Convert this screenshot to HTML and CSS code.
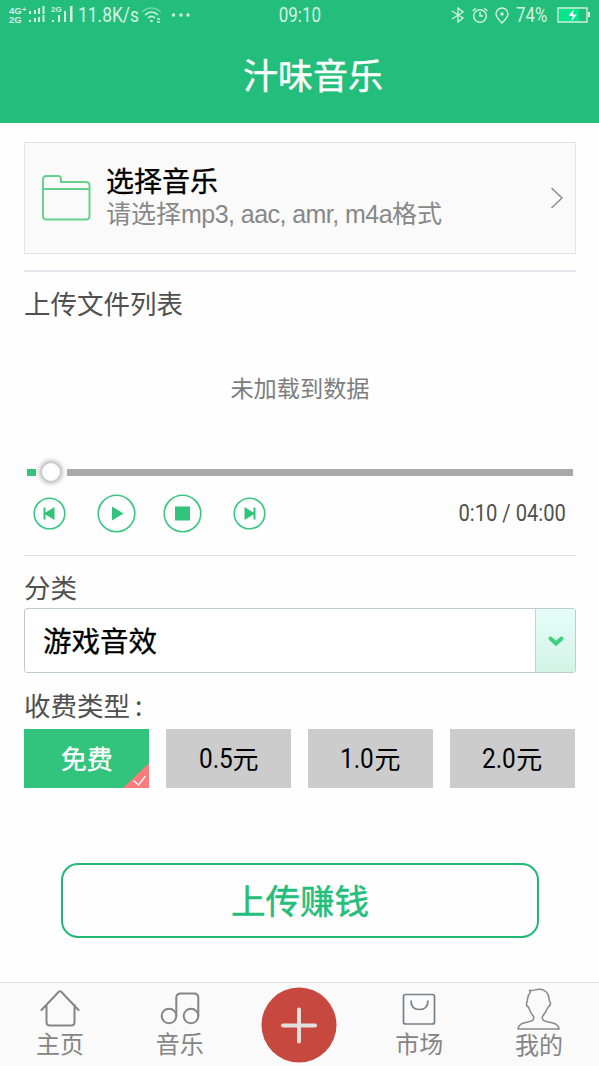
FILE: index.html
```html
<!DOCTYPE html>
<html lang="zh-CN">
<head>
<meta charset="utf-8">
<title>汁味音乐</title>
<link rel="stylesheet" href="styles.css">
</head>
<body>
<div class="app">
  <header class="header">
    <div class="status">
      <div class="status-left">
        <div class="net-types"><span>4G<sup>+</sup></span><span>2G</span></div>
        <svg class="signal-dual" width="16" height="18" viewBox="0 0 16 18" fill="#d3f2e3"><path d="M0 5h2v3H0zM5 4h2v4H5zM9 2h2v6H9zM13.500 0h2v8h-2zM0 14h2v2H0zM5 12h2v4H5zM9 11h2v5H9zM13.500 9h2v7h-2z"/></svg>
        <div class="sim2">
          <span>2G</span>
          <svg width="22" height="17" viewBox="0 0 22 17" fill="#d3f2e3"><path d="M1 14h2v2H1zM7 9h2v7H7zM13 5h2v11h-2zM19 0h2.500v16H19z"/></svg>
        </div>
        <span class="speed">11.8K/s</span>
        <svg class="wifi" width="22" height="18" viewBox="0 0 22 18" fill="none" stroke="#d3f2e3" stroke-width="1.500"><path d="M1 6q9-8 19 0" opacity=".45"/><path d="M4 9q6.500-6 13 0M7 12q3.500-3.500 7 0"/><circle cx="10.500" cy="15" r="1.300" fill="#d3f2e3" stroke="none"/><path d="M16 13h3M16 16h3"/></svg>
        <svg class="more" width="20" height="6" viewBox="0 0 20 6" fill="#d3f2e3"><circle cx="2.500" cy="3" r="1.700"/><circle cx="10" cy="3" r="1.700"/><circle cx="17" cy="3" r="1.700"/></svg>
      </div>
      <span class="clock">09:10</span>
      <div class="status-right">
        <svg width="14" height="16" viewBox="0 0 14 16" fill="none" stroke="#d3f2e3" stroke-width="1.300"><path d="M1 4l11 7-5 4V1l5 4L1 12"/></svg>
        <svg width="16" height="17" viewBox="0 0 16 17" fill="none" stroke="#d3f2e3" stroke-width="1.400"><circle cx="8" cy="9" r="6.300"/><path d="M8 5v4h3M.700 4l3-2.700M15.300 4l-3-2.700"/></svg>
        <svg width="14" height="17" viewBox="0 0 14 17" fill="none" stroke="#d3f2e3" stroke-width="1.400"><path d="M7 16C3 12 1 9.500 1 7a6 6 0 0 1 12 0c0 2.500-2 5-6 9z"/><circle cx="7" cy="7" r="1.700" fill="#d3f2e3" stroke="none"/></svg>
        <span class="percent">74%</span>
        <svg width="34" height="16" viewBox="0 0 34 16"><path d="M2 2h20v12H2z" fill="#00e68c"/><path d="M1 1h29v14H1z" fill="none" stroke="#d3f2e3" stroke-width="1.300"/><path d="M31 5h2v5h-2z" fill="#d3f2e3"/><path d="M16.500 2.500l-5 6.500h4l-1 5 5.500-6.500h-4z" fill="#fff"/></svg>
      </div>
    </div>
    <h1 class="title">汁味音乐</h1>
  </header>

  <main class="content">
    <section class="picker">
      <svg class="folder" width="50" height="48" viewBox="0 0 50 48" fill="none" stroke="#65d38b" stroke-width="2"><path d="M2 14V5.500Q2 2 5.500 2H17q3 0 3 3v3h25q3.500 0 3.500 3.500V42q0 3.500-3.500 3.500H5.500Q2 45.500 2 42zM2 15h46.500"/></svg>
      <div class="picker-text">
        <div class="picker-title">选择音乐</div>
        <div class="picker-hint">请选择<span>mp3, aac, amr, m4a</span>格式</div>
      </div>
      <svg width="14" height="22" viewBox="0 0 14 22" fill="none" stroke="#8d8d8d" stroke-width="1.500"><path d="M1.500 1l10.500 10L1.500 21"/></svg>
    </section>

    <section class="files">
      <h2 class="label">上传文件列表</h2>
      <p class="empty">未加载到数据</p>
      <div class="slider"><span class="played"></span><span class="knob"></span><span class="track"></span></div>
      <div class="player">
        <svg width="33" height="33" viewBox="0 0 33 33"><circle cx="16.500" cy="16.500" r="15.300" class="ring"/><path d="M10.500 10.500h2v5l9-5.500v13l-9-5.500v5h-2z" class="glyph"/></svg>
        <svg width="39" height="39" viewBox="0 0 39 39"><circle cx="19.500" cy="19.500" r="18.300" class="ring"/><path d="M15 12.500l11.500 7L15 26.500z" class="glyph"/></svg>
        <svg width="39" height="39" viewBox="0 0 39 39"><circle cx="19.500" cy="19.500" r="18.300" class="ring"/><path d="M12 12.500h15v14H12z" class="glyph"/></svg>
        <svg width="33" height="33" viewBox="0 0 33 33"><circle cx="16.500" cy="16.500" r="15.300" class="ring"/><path d="M22.500 10.500h-2v5L11.500 10v13l9-5.500v5h2z" class="glyph"/></svg>
        <span class="time">0:10 / 04:00</span>
      </div>
    </section>

    <h2 class="label category">分类</h2>
    <div class="select">
      <span class="select-value">游戏音效</span>
      <span class="select-arrow"><svg width="18" height="12" viewBox="0 0 18 12" fill="none" stroke="#3fd17d" stroke-width="4" stroke-linecap="round"><path d="M3.500 3.500L9 8.500l5.500-5"/></svg></span>
    </div>

    <h2 class="label fee">收费类型<span class="colon">:</span></h2>
    <div class="prices">
      <div class="price selected">免费
        <svg class="corner" width="26" height="25" viewBox="0 0 26 25"><path d="M26 0v25H0z" fill="#ff7a7a"/><path d="M10.500 17.500l5 4.500 7-9" fill="none" stroke="#fff" stroke-width="1.300"/></svg>
      </div>
      <div class="price"><span class="num">0.5</span>元</div>
      <div class="price"><span class="num">1.0</span>元</div>
      <div class="price"><span class="num">2.0</span>元</div>
    </div>

    <div class="upload">上传赚钱</div>
  </main>

  <nav class="tabs">
    <div class="tab">
      <svg width="42" height="42" viewBox="0 0 42 42" fill="none" stroke="#858585" stroke-width="2" stroke-linecap="round" stroke-linejoin="round"><path d="M2.500 23L19.500 5q1.500-1.500 3 0L39.500 23M7.500 18v17q0 3.500 3.500 3.500h21q3.500 0 3.500-3.500V18"/></svg>
      <span>主页</span>
    </div>
    <div class="tab">
      <svg width="42" height="42" viewBox="0 0 42 42" fill="none" stroke="#858585" stroke-width="2"><circle cx="10" cy="29" r="7.300"/><circle cx="32" cy="29" r="7.300"/><path d="M17.300 29V11q0-4.500 4.500-4.500H35q4.300 0 4.300 4.500v18"/></svg>
      <span>音乐</span>
    </div>
    <div class="tab add">
      <svg width="76" height="76" viewBox="0 0 76 76"><circle cx="38" cy="38" r="37.500" fill="#c7483f"/><path d="M38 22.500v32M22 38.500h32" stroke="#e3dfdf" stroke-width="4" stroke-linecap="round"/></svg>
    </div>
    <div class="tab">
      <svg width="42" height="42" viewBox="0 0 42 42" fill="none" stroke="#74808a" stroke-width="1.700"><rect x="5.500" y="7.500" width="31" height="29.500" rx="2"/><path d="M13 13.500q0 9 8.500 9T30 13.500"/></svg>
      <span>市场</span>
    </div>
    <div class="tab me">
      <svg width="44" height="44" viewBox="0 0 46 46" fill="none" stroke="#8a8a8a" stroke-width="1.600" stroke-linejoin="round"><path d="M14 5.500l-1-2q3 .5 6-.5c7-2 14 1 14.500 9.500 0 2 .5 3 1.500 4 0 2.500-1 4-2.500 4.500-1.500 4-3.500 7-6 10-.5 4 2 4.500 6 5.500 6 1.500 11 2 11.500 7.500H1c.5-5.500 4.500-6 10.500-7.500 4-1 6.500-1.500 6-5.500-2.500-3-4.500-6-5.500-10-1.500-.5-2.500-2-2-4.500 1-1 1-2 1-4 .5-3 1.500-5.500 3-7z"/></svg>
      <span>我的</span>
    </div>
  </nav>
</div>
</body>
</html>
```
FILE: styles.css
```css
* { box-sizing: border-box; }
body {
  margin: 0;
  background: #fefefe;
  color: #505050;
  font-family: "Noto Sans CJK SC", sans-serif;
}
svg { display: block; flex: none; }
.app { width: 599px; height: 1066px; display: flex; flex-direction: column; overflow: hidden; }

.header { height: 123px; flex: none; background: #23be7b; }
.status {
  height: 29px;
  padding: 0 8px 0 9px;
  display: grid;
  grid-template-columns: 1fr auto 1fr;
  align-items: center;
  color: #d3f2e3;
  font-family: Roboto, sans-serif;
  font-size: 20px;
}
.status-left { display: flex; align-items: center; white-space: nowrap; }
.net-types {
  width: 19px;
  padding-top: 1px;
  display: flex;
  flex-direction: column;
  font: bold 9.500px/9px "Liberation Sans", sans-serif;
}
.net-types sup { font-size: 8px; line-height: 0; vertical-align: 2px; }
.signal-dual { margin-left: 1px; }
.sim2 { display: grid; width: 24px; margin-left: 6px; }
.sim2 span, .sim2 svg { grid-area: 1 / 1; }
.sim2 span { font: bold 8px/8px "Liberation Sans", sans-serif; }
.speed { display: block; width: 58px; margin-left: 3px; transform: scaleX(.87); transform-origin: left; }
.wifi { margin-left: 5px; }
.more { margin-left: 8px; }
.clock { transform: scaleX(.85); }
.status-right { display: flex; align-items: center; justify-content: flex-end; gap: 7px; }
.status-right svg { margin-top: 1px; }
.percent { width: 34px; transform: scaleX(.84); transform-origin: left; white-space: nowrap; }
.title {
  margin: 0 0 0 27px;
  height: 90px;
  line-height: 90px;
  text-align: center;
  color: #fff;
  font-size: 35px;
  font-weight: 400;
  -webkit-text-stroke: .4px #fff;
}

.content { flex: 1; padding: 19px 23px 0 24px; }
.picker {
  height: 112px;
  padding: 0 11px 0 16px;
  display: flex;
  align-items: center;
  background: #fafafa;
  border: 1px solid #e2e2e2;
}
.picker-text { flex: 1; margin: -2px 0 0 15px; white-space: nowrap; }
.picker-title { color: #000; font-size: 28px; line-height: 33px; -webkit-text-stroke: .3px #000; }
.picker-hint { color: #888; font-size: 25px; line-height: 31px; }
.picker-hint span { font-family: "Liberation Sans", sans-serif; letter-spacing: -.55px; }

.files { margin-top: 16px; height: 286px; border-top: 2px solid #e6e6ec; border-bottom: 1px solid #dddde4; }
.label { margin: 0; font-size: 26.500px; font-weight: 400; line-height: 40px; }
.files .label { margin-top: 11px; }
.empty { margin: 46px 0 0; text-align: center; font-size: 23.200px; line-height: 36px; color: #7d7d7d; }
.slider { height: 24px; margin: 55px 3px 0; display: flex; align-items: center; }
.played { width: 9px; height: 7px; background: #32c37d; }
.knob { flex: none; width: 18px; height: 18px; margin: 0 7px 0 6px; border-radius: 50%; background: #fff; box-shadow: 0 0 5px 2px #aaa; }
.track { flex: 1; height: 7px; background: #a9a9a9; }
.player { display: flex; align-items: center; height: 39px; margin-top: 10px; padding: 0 10px 0 9px; }
.player svg + svg { margin-left: 31px; }
.player svg:nth-child(3) { margin-left: 27px; }
.player svg:nth-child(4) { margin-left: 31px; }
.ring { fill: none; stroke: #3cc681; stroke-width: 1.600; }
.glyph { fill: #32c37d; }
.time { margin-left: auto; font: 24px/38px Roboto, sans-serif; transform: translateY(-1px) scaleX(.84); transform-origin: right; }

.category { margin-top: 11px; }
.select { height: 65px; margin-top: 1px; display: flex; border: 1px solid #bfcdca; border-radius: 3px; background: #fff; overflow: hidden; }
.select-value { flex: 1; padding-left: 18px; color: #000; font-size: 28.500px; line-height: 61px; -webkit-text-stroke: .3px #000; }
.select-arrow {
  width: 40px;
  display: flex;
  align-items: center;
  justify-content: center;
  border-left: 1px solid #bfd6cd;
  background: linear-gradient(#e5fdfa, #d3f4e7);
}
.fee { margin-top: 12px; }
.colon { margin-left: 5px; }
.prices { margin-top: 4px; display: grid; grid-template-columns: repeat(4, 1fr); gap: 16.500px; padding-right: 1px; }
.price {
  position: relative;
  height: 59px;
  padding-bottom: 2px;
  display: flex;
  align-items: center;
  justify-content: center;
  background: #ccc;
  color: #000;
  font-size: 26px;
}
.price.selected { background: #32c37d; color: #fff; -webkit-text-stroke: .3px #fff; }
.corner { position: absolute; right: 0; bottom: 0; }
.num { width: 34px; padding-top: 2px; font-family: Roboto, sans-serif; font-size: 28px; transform: scaleX(.87); transform-origin: left; }
.upload {
  height: 75px;
  margin: 75px 37px 0;
  border: 2px solid #23b874;
  border-radius: 17px;
  color: #23be7b;
  text-align: center;
  font-size: 34.500px;
  line-height: 68px;
  -webkit-text-stroke: .5px #23be7b;
}

.tabs {
  height: 84px;
  flex: none;
  display: grid;
  grid-template-columns: repeat(5, 1fr);
  background: #fafafa;
  border-top: 1px solid #dde1e8;
}
.tab { display: flex; flex-direction: column; align-items: center; padding-top: 4px; color: #858585; font-size: 24px; line-height: 34px; }
.tab span { margin-top: -3px; }
.me span { margin-top: -4px; }
```
